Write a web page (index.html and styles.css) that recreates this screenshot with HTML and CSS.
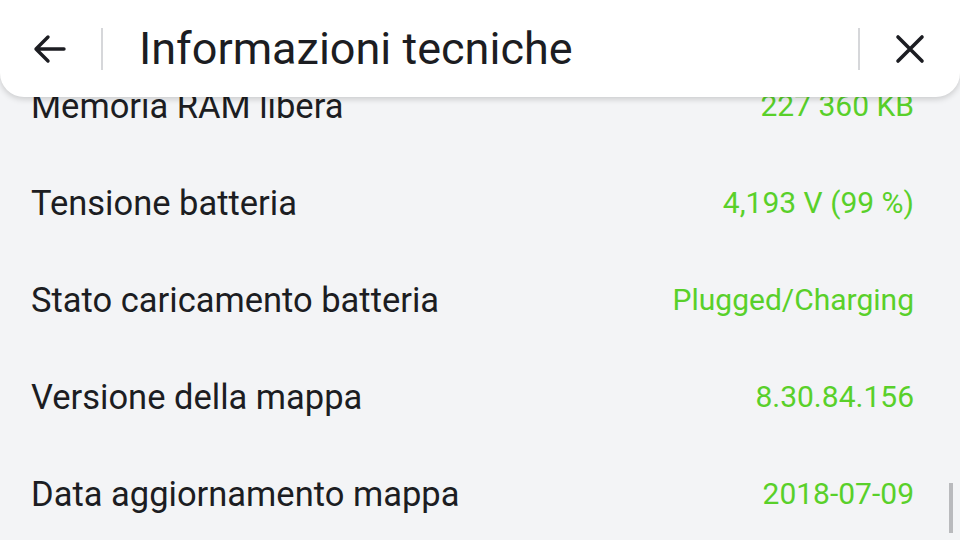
FILE: index.html
```html
<!DOCTYPE html>
<html lang="it">
<head>
<meta charset="utf-8">
<link rel="stylesheet" href="styles.css">
</head>
<body>
<div class="screen">
  <header class="topbar">
    <button class="icon-btn back" aria-label="Indietro">
      <svg width="34" height="30" viewBox="0 0 34 30"><path d="M3 15H31M3 15L15 3M3 15L15 27" fill="none" stroke="#1c1d22" stroke-width="3.4" stroke-linecap="round" stroke-linejoin="round"/></svg>
    </button>
    <span class="divider"></span>
    <h1 class="title">Informazioni tecniche</h1>
    <span class="divider"></span>
    <button class="icon-btn close" aria-label="Chiudi">
      <svg width="30" height="30" viewBox="0 0 30 30"><path d="M3 3L27 27M27 3L3 27" fill="none" stroke="#1c1d22" stroke-width="3.6" stroke-linecap="round"/></svg>
    </button>
  </header>
  <ul class="list">
    <li class="row"><span class="label">Memoria RAM libera</span><span class="value">227 360 KB</span></li>
    <li class="row"><span class="label">Tensione batteria</span><span class="value">4,193 V (99 %)</span></li>
    <li class="row"><span class="label">Stato caricamento batteria</span><span class="value">Plugged/Charging</span></li>
    <li class="row"><span class="label">Versione della mappa</span><span class="value">8.30.84.156</span></li>
    <li class="row"><span class="label">Data aggiornamento mappa</span><span class="value">2018-07-09</span></li>
  </ul>
  <div class="scrollbar"></div>
</div>
</body>
</html>
```
FILE: styles.css
```css
html, body {
  margin: 0;
  padding: 0;
  background: #f3f4f6;
}
body {
  font-family: Roboto, "Noto Sans", sans-serif;
  color: #1c1d22;
}
.screen {
  position: relative;
  width: 960px;
  height: 540px;
  overflow: hidden;
  background: #f3f4f6;
}
.topbar {
  position: absolute;
  top: 0;
  left: 0;
  right: 0;
  height: 97px;
  background: #ffffff;
  border-radius: 0 0 24px 24px;
  box-shadow: 0 2px 6px rgba(0, 0, 0, 0.18);
  display: flex;
  align-items: center;
  padding: 0 30px 0 32px;
  box-sizing: border-box;
  z-index: 2;
}
.icon-btn {
  border: 0;
  background: none;
  padding: 0;
  display: flex;
  align-items: center;
  justify-content: center;
}
.back {
  width: 36px;
  height: 40px;
}
.close {
  width: 40px;
  height: 40px;
  margin-left: 30px;
}
.divider {
  width: 2px;
  height: 42px;
  background: #d6d7da;
  margin-left: 33px;
}
.title {
  margin: 0 0 0 36px;
  flex: 1;
  font-weight: 400;
  font-size: 45px;
  color: #1c1d22;
  line-height: 1;
}
.list {
  list-style: none;
  margin: 0;
  padding: 57px 0 0 0;
}
.row {
  height: 97px;
  display: flex;
  align-items: center;
  justify-content: space-between;
  padding: 0 46px 0 31px;
}
.label {
  font-size: 34.5px;
  color: #1c1d22;
}
.value {
  font-size: 30px;
  color: #59d02a;
}
.scrollbar {
  position: absolute;
  right: 7px;
  top: 483px;
  width: 4px;
  height: 50px;
  background: #b9babd;
}
```
